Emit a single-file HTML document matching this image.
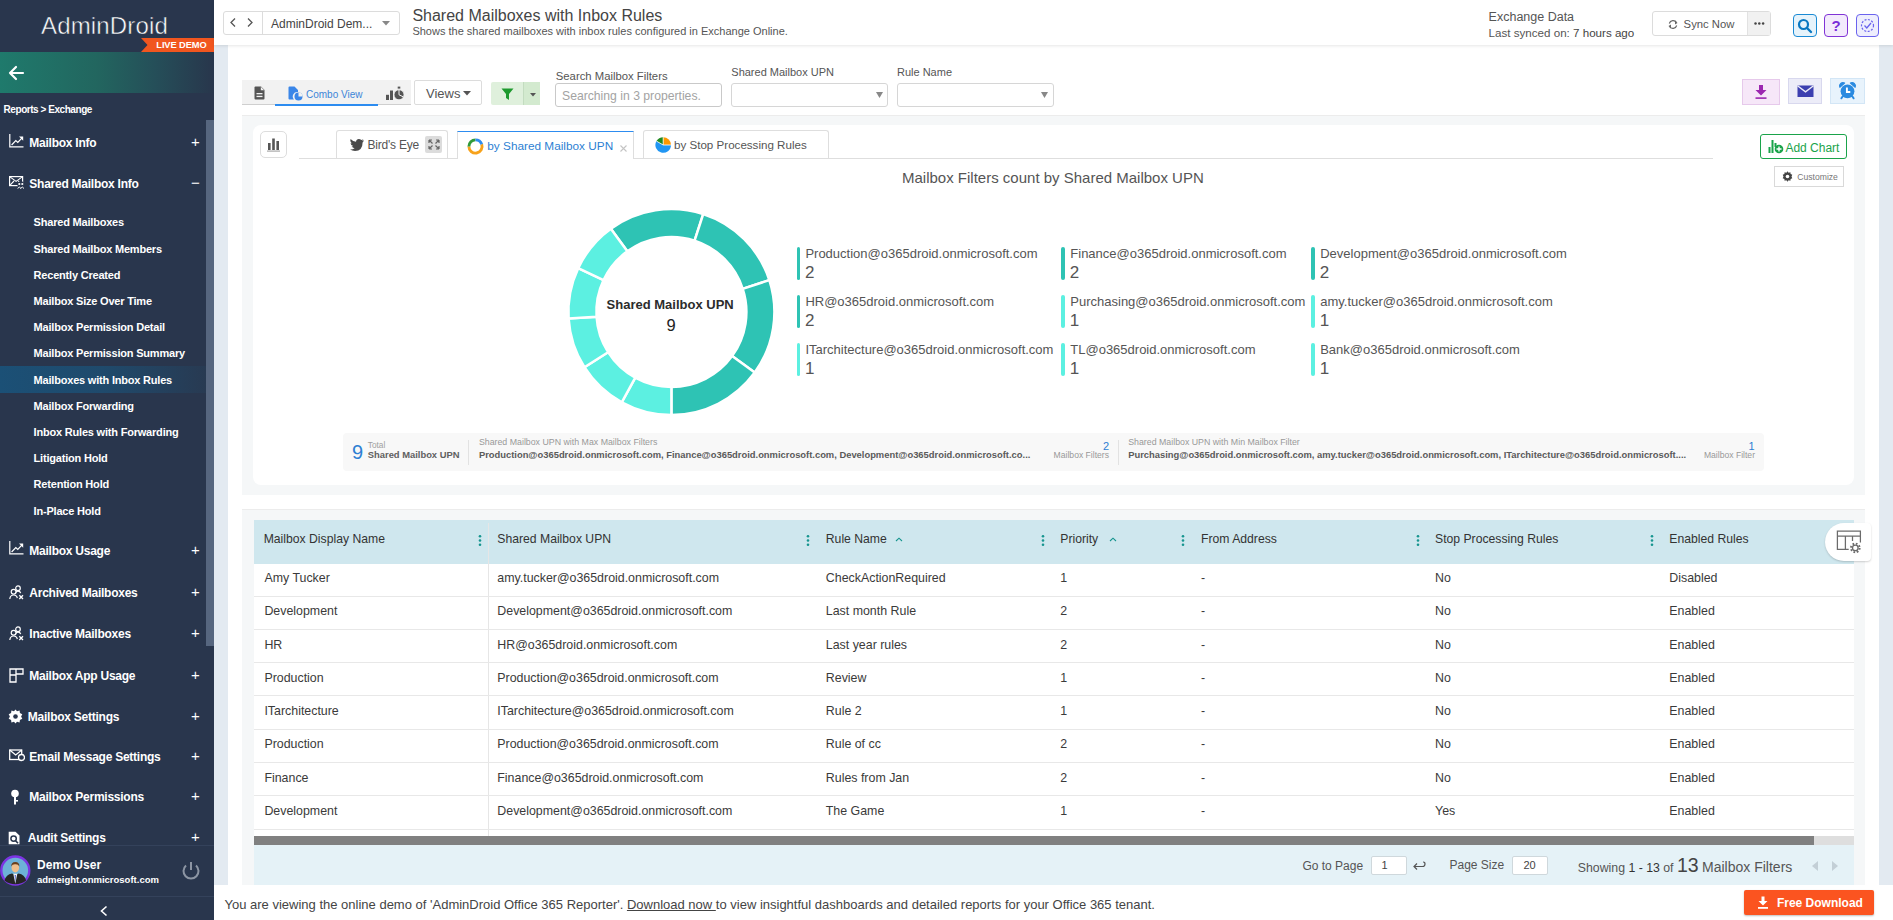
<!DOCTYPE html><html><head><meta charset="utf-8"><style>
html,body{margin:0;padding:0;}
body{width:1893px;height:920px;overflow:hidden;position:relative;background:#fff;font-family:"Liberation Sans",sans-serif;}
.t{position:absolute;white-space:nowrap;}
.r{position:absolute;box-sizing:border-box;}
</style></head><body>

<div class="r" style="left:0px;top:0px;width:214.0px;height:920.0px;background:#29364d"></div>
<div class="t" style="left:41px;top:9.0px;font-size:24px;line-height:34px;color:#fff;letter-spacing:0.15px;-webkit-text-stroke:0.5px #29364d;">AdminDroid</div>
<svg class="r" style="left:141px;top:38px;" width="73" height="14" viewBox="0 0 73 14"><polygon points="0,0 73,0 73,14 0,14 6.5,7" fill="#f1561f"/></svg>
<div class="t" style="left:156.3px;top:38.8px;font-size:9.3px;line-height:13px;color:#fff;font-weight:bold;letter-spacing:-0.1px;">LIVE DEMO</div>
<div class="r" style="left:0px;top:52px;width:214.0px;height:41.0px;background:linear-gradient(90deg,#1f7a6c 0%,#22665f 45%,#254f59 72%,#28364c 100%)"></div>
<svg class="r" style="left:7px;top:64px;" width="18" height="18" viewBox="0 0 18 18"><path d="M16,9 H3 M9,3 L3,9 L9,15" stroke="#fff" stroke-width="2.2" fill="none" stroke-linecap="round" stroke-linejoin="round"/></svg>
<div class="t" style="left:3.6px;top:102.7px;font-size:10px;line-height:14px;color:#fff;font-weight:bold;letter-spacing:-0.45px;">Reports &gt; Exchange</div>
<div class="r" style="left:206px;top:120px;width:8.0px;height:526.0px;background:#56667f"></div>
<div class="r" style="left:0px;top:366px;width:206.0px;height:27.0px;background:linear-gradient(90deg,#1b5076 0%,#1f4a6c 50%,#283a52 100%)"></div>
<svg class="r" style="left:9px;top:133.6px;" width="15" height="14" viewBox="0 0 15 14"><path d="M0.8,0 V12.8 H14.5" stroke="#fff" stroke-width="1.2" fill="none"/><path d="M2.6,11 L6.8,6.5 L8.8,8.5 L13.3,3.6" stroke="#fff" stroke-width="1.2" fill="none"/><path d="M10,2.6 H14.2 V6.8 Z" fill="#fff"/></svg>
<div class="t" style="left:29.3px;top:135.1px;font-size:12px;line-height:17px;color:#fff;font-weight:bold;letter-spacing:-0.25px;">Mailbox Info</div>
<div class="t" style="left:191px;top:134.1px;font-size:15px;line-height:16px;color:#fff;">+</div>
<svg class="r" style="left:9px;top:176.4px;" width="16" height="13" viewBox="0 0 16 13"><rect x="0.6" y="0.6" width="13" height="9" stroke="#fff" stroke-width="1.2" fill="none"/><path d="M0.6,0.6 L7.1,5.4 L13.6,0.6 M0.6,9.6 L5,5 M13.6,9.6 L9.2,5" stroke="#fff" stroke-width="1.1" fill="none"/><circle cx="11.8" cy="8.6" r="3.4" fill="#29364d"/><circle cx="10.3" cy="8" r="1.1" fill="#fff"/><circle cx="13.3" cy="8" r="1.1" fill="#fff"/><path d="M8.6,12.5 Q10.3,9.6 12,12.5 M11.6,12.5 Q13.3,9.6 15,12.5" stroke="#fff" stroke-width="1" fill="none"/></svg>
<div class="t" style="left:29.3px;top:175.9px;font-size:12px;line-height:17px;color:#fff;font-weight:bold;letter-spacing:-0.25px;">Shared Mailbox Info</div>
<div class="t" style="left:191px;top:174.9px;font-size:15px;line-height:16px;color:#fff;">&minus;</div>
<div class="t" style="left:33.6px;top:214.7px;font-size:11px;line-height:15px;color:#fff;font-weight:bold;letter-spacing:-0.2px;">Shared Mailboxes</div>
<div class="t" style="left:33.6px;top:241.7px;font-size:11px;line-height:15px;color:#fff;font-weight:bold;letter-spacing:-0.2px;">Shared Mailbox Members</div>
<div class="t" style="left:33.6px;top:267.5px;font-size:11px;line-height:15px;color:#fff;font-weight:bold;letter-spacing:-0.2px;">Recently Created</div>
<div class="t" style="left:33.6px;top:293.5px;font-size:11px;line-height:15px;color:#fff;font-weight:bold;letter-spacing:-0.2px;">Mailbox Size Over Time</div>
<div class="t" style="left:33.6px;top:319.7px;font-size:11px;line-height:15px;color:#fff;font-weight:bold;letter-spacing:-0.2px;">Mailbox Permission Detail</div>
<div class="t" style="left:33.6px;top:346.3px;font-size:11px;line-height:15px;color:#fff;font-weight:bold;letter-spacing:-0.2px;">Mailbox Permission Summary</div>
<div class="t" style="left:33.6px;top:372.5px;font-size:11px;line-height:15px;color:#fff;font-weight:bold;letter-spacing:-0.2px;">Mailboxes with Inbox Rules</div>
<div class="t" style="left:33.6px;top:398.5px;font-size:11px;line-height:15px;color:#fff;font-weight:bold;letter-spacing:-0.2px;">Mailbox Forwarding</div>
<div class="t" style="left:33.6px;top:424.7px;font-size:11px;line-height:15px;color:#fff;font-weight:bold;letter-spacing:-0.2px;">Inbox Rules with Forwarding</div>
<div class="t" style="left:33.6px;top:451.4px;font-size:11px;line-height:15px;color:#fff;font-weight:bold;letter-spacing:-0.2px;">Litigation Hold</div>
<div class="t" style="left:33.6px;top:477.2px;font-size:11px;line-height:15px;color:#fff;font-weight:bold;letter-spacing:-0.2px;">Retention Hold</div>
<div class="t" style="left:33.6px;top:503.5px;font-size:11px;line-height:15px;color:#fff;font-weight:bold;letter-spacing:-0.2px;">In-Place Hold</div>
<svg class="r" style="left:9px;top:541.4px;" width="15" height="14" viewBox="0 0 15 14"><path d="M0.8,0 V12.8 H14.5" stroke="#fff" stroke-width="1.2" fill="none"/><path d="M2.6,11 L6.8,6.5 L8.8,8.5 L13.3,3.6" stroke="#fff" stroke-width="1.2" fill="none"/><path d="M10,2.6 H14.2 V6.8 Z" fill="#fff"/></svg>
<div class="t" style="left:29.3px;top:542.9px;font-size:12px;line-height:17px;color:#fff;font-weight:bold;letter-spacing:-0.25px;">Mailbox Usage</div>
<div class="t" style="left:191px;top:541.9px;font-size:15px;line-height:16px;color:#fff;">+</div>
<svg class="r" style="left:9px;top:585.1px;" width="16" height="15" viewBox="0 0 16 15"><circle cx="9" cy="3.2" r="2.3" stroke="#fff" stroke-width="1.2" fill="none"/><path d="M6.3,9 Q6.8,6.2 9,6.2 Q11.2,6.2 11.7,8.2" stroke="#fff" stroke-width="1.2" fill="none"/><circle cx="4.6" cy="6.8" r="2.4" fill="#29364d" stroke="#fff" stroke-width="1.2"/><path d="M0.8,14 Q1.2,10 4.6,10 Q7.8,10 8.3,13.2" stroke="#fff" stroke-width="1.2" fill="none"/><path d="M10.3,10.3 L14,14 M14,10.3 L10.3,14" stroke="#fff" stroke-width="1.3"/></svg>
<div class="t" style="left:29.3px;top:585.1px;font-size:12px;line-height:17px;color:#fff;font-weight:bold;letter-spacing:-0.25px;">Archived Mailboxes</div>
<div class="t" style="left:191px;top:584.1px;font-size:15px;line-height:16px;color:#fff;">+</div>
<svg class="r" style="left:9px;top:626.0px;" width="16" height="15" viewBox="0 0 16 15"><circle cx="9" cy="3.2" r="2.3" stroke="#fff" stroke-width="1.2" fill="none"/><path d="M6.3,9 Q6.8,6.2 9,6.2 Q11.2,6.2 11.7,8.2" stroke="#fff" stroke-width="1.2" fill="none"/><circle cx="4.6" cy="6.8" r="2.4" fill="#29364d" stroke="#fff" stroke-width="1.2"/><path d="M0.8,14 Q1.2,10 4.6,10 Q7.8,10 8.3,13.2" stroke="#fff" stroke-width="1.2" fill="none"/><path d="M10.3,10.3 L14,14 M14,10.3 L10.3,14" stroke="#fff" stroke-width="1.3"/></svg>
<div class="t" style="left:29.3px;top:626.0px;font-size:12px;line-height:17px;color:#fff;font-weight:bold;letter-spacing:-0.25px;">Inactive Mailboxes</div>
<div class="t" style="left:191px;top:625.0px;font-size:15px;line-height:16px;color:#fff;">+</div>
<svg class="r" style="left:9px;top:667.7px;" width="15" height="15" viewBox="0 0 15 15"><path d="M1,1 H14 V6 H7 V14 H1 Z M1,7 H7 M7,1 V7" stroke="#fff" stroke-width="1.3" fill="none"/></svg>
<div class="t" style="left:29.3px;top:667.7px;font-size:12px;line-height:17px;color:#fff;font-weight:bold;letter-spacing:-0.25px;">Mailbox App Usage</div>
<div class="t" style="left:191px;top:666.7px;font-size:15px;line-height:16px;color:#fff;">+</div>
<svg class="r" style="left:8px;top:709.0px;" width="15" height="15" viewBox="0 0 15 15"><path d="M7.5,0.5 L9,2.3 L11.6,1.6 L11.9,4.1 L14.3,5.2 L13.1,7.5 L14.3,9.8 L11.9,10.9 L11.6,13.4 L9,12.7 L7.5,14.5 L6,12.7 L3.4,13.4 L3.1,10.9 L0.7,9.8 L1.9,7.5 L0.7,5.2 L3.1,4.1 L3.4,1.6 L6,2.3 Z" fill="#fff"/><circle cx="7.5" cy="7.5" r="2.3" fill="#29364d"/></svg>
<div class="t" style="left:27.8px;top:709.0px;font-size:12px;line-height:17px;color:#fff;font-weight:bold;letter-spacing:-0.25px;">Mailbox Settings</div>
<div class="t" style="left:191px;top:708.0px;font-size:15px;line-height:16px;color:#fff;">+</div>
<svg class="r" style="left:9px;top:749.0px;" width="16" height="13" viewBox="0 0 16 13"><rect x="0.7" y="1" width="12" height="9.5" stroke="#fff" stroke-width="1.3" fill="none"/><path d="M0.7,1 L6.7,6 L12.7,1" stroke="#fff" stroke-width="1.3" fill="none"/><circle cx="12.5" cy="8.5" r="3" fill="#29364d" stroke="#fff" stroke-width="1.3"/></svg>
<div class="t" style="left:29.3px;top:749.0px;font-size:12px;line-height:17px;color:#fff;font-weight:bold;letter-spacing:-0.25px;">Email Message Settings</div>
<div class="t" style="left:191px;top:748.0px;font-size:15px;line-height:16px;color:#fff;">+</div>
<svg class="r" style="left:9px;top:789.0px;" width="12" height="16" viewBox="0 0 12 16"><circle cx="6" cy="4.5" r="3.8" fill="#fff"/><rect x="5" y="6" width="2" height="9.5" fill="#fff"/><rect x="6" y="11" width="3" height="1.6" fill="#fff"/></svg>
<div class="t" style="left:29.3px;top:789.0px;font-size:12px;line-height:17px;color:#fff;font-weight:bold;letter-spacing:-0.25px;">Mailbox Permissions</div>
<div class="t" style="left:191px;top:788.0px;font-size:15px;line-height:16px;color:#fff;">+</div>
<svg class="r" style="left:8px;top:830.9px;" width="13" height="14" viewBox="0 0 13 14"><path d="M0.7,0.7 H7.5 L11.5,4.5 V13.3 H0.7 Z" fill="#fff"/><circle cx="5.6" cy="7.6" r="2.7" stroke="#29364d" stroke-width="1.5" fill="none"/><path d="M7.5,9.6 L10,12.2" stroke="#29364d" stroke-width="1.6"/></svg>
<div class="t" style="left:27.8px;top:829.9px;font-size:12px;line-height:17px;color:#fff;font-weight:bold;letter-spacing:-0.25px;">Audit Settings</div>
<div class="t" style="left:191px;top:828.9px;font-size:15px;line-height:16px;color:#fff;">+</div>
<div class="r" style="left:0px;top:844.5px;width:214.0px;height:52.0px;background:#29364d;border-top:1px solid #34425b;border-bottom:1px solid #34425b"></div>
<svg class="r" style="left:0px;top:855px;" width="31" height="31" viewBox="0 0 31 31"><circle cx="15.3" cy="15.5" r="14" fill="#6db1d8" stroke="#7c35e3" stroke-width="2.4"/><path d="M4.5,25.5 Q6,19.5 12,18.5 L15.3,20 L18.6,18.5 Q24.6,19.5 26.1,25.5 Q21.5,29.3 15.3,29.3 Q9.1,29.3 4.5,25.5 Z" fill="#262626"/><path d="M13.3,18.7 L15.3,28.8 L17.3,18.7 Z" fill="#f2f2f2"/><path d="M14.6,20 L15.3,28 L16,20 Z" fill="#5a6fd0"/><ellipse cx="15.3" cy="12.8" rx="3.8" ry="4.6" fill="#f0be8c"/><path d="M11.3,11.5 Q11,7 15.3,7 Q19.6,7 19.3,11.5 Q18.5,9 15.3,9.2 Q12.1,9 11.3,11.5 Z" fill="#6b3f1d"/></svg>
<div class="t" style="left:37px;top:857.3px;font-size:12px;line-height:17px;color:#fff;font-weight:bold;letter-spacing:0.1px;">Demo User</div>
<div class="t" style="left:37px;top:872.9px;font-size:9.5px;line-height:13px;color:#fff;font-weight:bold;">admeight.onmicrosoft.com</div>
<svg class="r" style="left:181px;top:861px;" width="20" height="19" viewBox="0 0 20 19"><path d="M5,4.5 A7.5,7.5 0 1 0 15,4.5" stroke="#8c95a3" stroke-width="2" fill="none"/><path d="M10,1 V9" stroke="#8c95a3" stroke-width="2"/></svg>
<svg class="r" style="left:99px;top:905px;" width="10" height="12" viewBox="0 0 10 12"><path d="M7.5,1.5 L2.5,6 L7.5,10.5" stroke="#fff" stroke-width="1.6" fill="none"/></svg>
<div class="r" style="left:214px;top:45px;width:14.0px;height:840.0px;background:#e3eaf1"></div>
<div class="r" style="left:1879px;top:45px;width:14.0px;height:840.0px;background:#e3eaf1"></div>
<div class="r" style="left:214px;top:0px;width:1679.0px;height:45.0px;background:#fff;box-shadow:0 1px 3px rgba(0,0,0,0.10)"></div>
<div class="r" style="left:222.5px;top:11px;width:177.5px;height:24.0px;border:1px solid #dcdcdc;border-radius:3px;background:#fff"></div>
<div class="r" style="left:261.5px;top:11px;width:1.0px;height:24.0px;background:#dcdcdc"></div>
<svg class="r" style="left:229px;top:17px;" width="8" height="11" viewBox="0 0 8 11"><path d="M6,1.5 L2,5.5 L6,9.5" stroke="#555" stroke-width="1.3" fill="none"/></svg>
<svg class="r" style="left:246px;top:17px;" width="8" height="11" viewBox="0 0 8 11"><path d="M2,1.5 L6,5.5 L2,9.5" stroke="#555" stroke-width="1.3" fill="none"/></svg>
<div class="t" style="left:271px;top:16.0px;font-size:12px;line-height:17px;color:#444;">AdminDroid Dem...</div>
<svg class="r" style="left:382px;top:21px;" width="9" height="5" viewBox="0 0 9 5"><polygon points="0,0 8,0 4,4.5" fill="#888"/></svg>
<div class="t" style="left:412.4px;top:4.5px;font-size:16px;line-height:22px;color:#444;">Shared Mailboxes with Inbox Rules</div>
<div class="t" style="left:412.4px;top:23.7px;font-size:11px;line-height:15px;color:#555;">Shows the shared mailboxes with inbox rules configured in Exchange Online.</div>
<div class="t" style="left:1488.6px;top:7.6px;font-size:12.5px;line-height:18px;color:#555;">Exchange Data</div>
<div class="t" style="left:1488.6px;top:25.0px;font-size:11.6px;line-height:16px;color:#555;">Last synced on: <span style="color:#444">7 hours ago</span></div>
<div class="r" style="left:1652.3px;top:11.2px;width:118.4px;height:25.3px;border:1px solid #dcdcdc;border-radius:3px;background:#fff"></div>
<div class="r" style="left:1747.3px;top:12.2px;width:22.4px;height:23.3px;background:#f1f1f1;border-left:1px solid #e2e2e2"></div>
<svg class="r" style="left:1668px;top:19px;" width="10" height="11" viewBox="0 0 10 11"><path d="M8.5,3.5 A4,4 0 0 0 1.3,4.5 M1.5,7.5 A4,4 0 0 0 8.7,6.5" stroke="#666" stroke-width="1.2" fill="none"/><polygon points="7,1.5 9.5,4 7,5.5" fill="#666"/><polygon points="3,9.5 0.5,7 3,5.5" fill="#666"/></svg>
<div class="t" style="left:1683.6px;top:16.0px;font-size:11.3px;line-height:16px;color:#555;">Sync Now</div>
<svg class="r" style="left:1753px;top:21px;" width="14" height="5" viewBox="0 0 14 5"><circle cx="2.5" cy="2.5" r="1.25" fill="#444"/><circle cx="6.3" cy="2.5" r="1.25" fill="#444"/><circle cx="10.1" cy="2.5" r="1.25" fill="#444"/></svg>
<div class="r" style="left:1793.1px;top:14.2px;width:23.8px;height:22.5px;border:1.5px solid #1a8ad4;border-radius:4px;background:#e6f3fb"></div>
<svg class="r" style="left:1797px;top:18px;" width="16" height="16" viewBox="0 0 16 16"><circle cx="6.5" cy="6.5" r="4.5" stroke="#0a78c2" stroke-width="2.2" fill="none"/><path d="M10,10 L14,14" stroke="#0a78c2" stroke-width="2.4" stroke-linecap="round"/></svg>
<div class="r" style="left:1824.2px;top:14.2px;width:23.5px;height:22.5px;border:1.5px solid #8033d6;border-radius:4px;background:#f3eafc"></div>
<div class="t" style="left:1831.5px;top:16.5px;font-size:15px;line-height:18px;color:#7a2dd8;font-weight:bold;">?</div>
<div class="r" style="left:1856.3px;top:14.2px;width:22.6px;height:22.5px;border:1.5px solid #6a63ee;border-radius:4px;background:#eeeefd"></div>
<svg class="r" style="left:1860px;top:18px;" width="15" height="15" viewBox="0 0 15 15"><circle cx="7.5" cy="7.5" r="6" stroke="#6a63ee" stroke-width="1.2" fill="none" stroke-dasharray="2 1.5"/><path d="M4.5,7.5 L6.8,10 L11,5" stroke="#6a63ee" stroke-width="1.3" fill="none"/></svg>
<div class="r" style="left:242px;top:80.2px;width:169.0px;height:25.1px;background:#f2f2f2;border-bottom:1px solid #cfcfcf"></div>
<div class="r" style="left:275px;top:103.8px;width:103.0px;height:2.0px;background:#2d8cf0"></div>
<svg class="r" style="left:253.5px;top:86px;" width="11" height="14" viewBox="0 0 11 14"><path d="M0.5,1.5 Q0.5,0.5 1.5,0.5 H7 L10.5,4 V12.5 Q10.5,13.5 9.5,13.5 H1.5 Q0.5,13.5 0.5,12.5 Z" fill="#555"/><path d="M6.8,0.8 V4.2 H10.2 Z" fill="#f2f2f2"/><rect x="2.5" y="7" width="6" height="1.3" fill="#f2f2f2"/><rect x="2.5" y="9.8" width="6" height="1.3" fill="#f2f2f2"/></svg>
<svg class="r" style="left:288px;top:86px;" width="15" height="15" viewBox="0 0 15 15"><path d="M0.5,1.5 Q0.5,0.5 1.5,0.5 H6.5 L10,4 V6 A4.5,4.5 0 0 0 6,13.5 H1.5 Q0.5,13.5 0.5,12.5 Z" fill="#3a86e8"/><circle cx="10.5" cy="10.5" r="4" fill="#3a86e8"/><path d="M10.5,10.5 V6.5 A4,4 0 0 1 14.5,10.5 Z" fill="#f2f2f2"/></svg>
<div class="t" style="left:306px;top:87.7px;font-size:10px;line-height:14px;color:#3d85d8;">Combo View</div>
<svg class="r" style="left:386px;top:86px;" width="19" height="15" viewBox="0 0 19 15"><rect x="0" y="8.8" width="3" height="5.2" fill="#555"/><rect x="4" y="4.5" width="3" height="9.5" fill="#555"/><circle cx="13" cy="8.8" r="5" fill="#555" stroke="#f2f2f2" stroke-width="0.8"/><path d="M13,8.8 V3.6 M13,8.8 L17.6,11" stroke="#f2f2f2" stroke-width="1"/><rect x="11.7" y="0.6" width="2.6" height="2" fill="#555"/></svg>
<div class="r" style="left:414.3px;top:80.3px;width:68.2px;height:25.0px;border:1px solid #dcdcdc;border-radius:2px;background:#fff"></div>
<div class="t" style="left:426px;top:84.5px;font-size:13px;line-height:18px;color:#555;">Views</div>
<svg class="r" style="left:463px;top:91px;" width="9" height="6" viewBox="0 0 9 6"><polygon points="0,0 8,0 4,4.5" fill="#555"/></svg>
<div class="r" style="left:490.5px;top:81.5px;width:49.5px;height:23.8px;background:#dff0dc;border-radius:2px"></div>
<div class="r" style="left:522.6px;top:81.5px;width:17.4px;height:23.8px;background:#d3eacf;border-left:1px solid #c3dcc0"></div>
<svg class="r" style="left:500.5px;top:88px;" width="13" height="13" viewBox="0 0 13 13"><path d="M0.5,0.5 H12.5 L8,6 V12 L5,10 V6 Z" fill="#1e9a2e"/></svg>
<svg class="r" style="left:529.5px;top:93px;" width="7" height="5" viewBox="0 0 7 5"><polygon points="0,0 6,0 3,3.5" fill="#555"/></svg>
<div class="t" style="left:555.8px;top:68.0px;font-size:11.3px;line-height:16px;color:#555;">Search Mailbox Filters</div>
<div class="r" style="left:555px;top:83px;width:167.0px;height:24.0px;border:1px solid #c9c9c9;border-radius:3px;background:#fff"></div>
<div class="t" style="left:562px;top:87.8px;font-size:12.2px;line-height:17px;color:#a3a3a3;">Searching in 3 properties.</div>
<div class="t" style="left:731.3px;top:64.7px;font-size:11px;line-height:15px;color:#555;">Shared Mailbox UPN</div>
<div class="r" style="left:731px;top:83px;width:157.0px;height:24.0px;border:1px solid #d6d6d6;border-radius:3px;background:#fff"></div>
<svg class="r" style="left:876px;top:92px;" width="9" height="7" viewBox="0 0 9 7"><polygon points="0,0 7,0 3.5,6" fill="#888"/></svg>
<div class="t" style="left:897px;top:64.7px;font-size:11px;line-height:15px;color:#555;">Rule Name</div>
<div class="r" style="left:897px;top:83px;width:157.0px;height:24.0px;border:1px solid #d6d6d6;border-radius:3px;background:#fff"></div>
<svg class="r" style="left:1041px;top:92px;" width="9" height="7" viewBox="0 0 9 7"><polygon points="0,0 7,0 3.5,6" fill="#888"/></svg>
<div class="r" style="left:1742px;top:79px;width:38.0px;height:25.8px;background:#f6e7f8;border:1px solid #e6c9eb"></div>
<svg class="r" style="left:1753px;top:84px;" width="16" height="16" viewBox="0 0 16 16"><path d="M6,1 H10 V6 H13.5 L8,11.5 L2.5,6 H6 Z" fill="#9c27b0"/><rect x="2.5" y="13.3" width="11" height="1.6" fill="#9c27b0"/></svg>
<div class="r" style="left:1788.2px;top:78.4px;width:33.4px;height:25.6px;background:#ececf8;border:1px solid #d8d8ee"></div>
<svg class="r" style="left:1796.5px;top:85px;" width="17" height="12.5" viewBox="0 0 17 12.5"><path d="M0.5,0.5 H16.5 V12 H0.5 Z" fill="#3c3fb0"/><path d="M0.5,0.8 L8.5,6.8 L16.5,0.8" stroke="#ececf8" stroke-width="1.4" fill="none"/></svg>
<div class="r" style="left:1830.3px;top:78.4px;width:34.4px;height:25.6px;background:#e8f3fc;border:1px solid #d3e6f6"></div>
<svg class="r" style="left:1837.5px;top:81px;" width="20" height="20" viewBox="0 0 20 20"><path d="M1.8,6.2 A3.4,3.4 0 0 1 6.6,2 Z M17.2,6.2 A3.4,3.4 0 0 0 12.4,2 Z" fill="#2a8ae0" stroke="#2a8ae0" stroke-width="1.2" stroke-linejoin="round"/><circle cx="9.5" cy="10.3" r="6.9" fill="#2a8ae0"/><path d="M4.6,15.5 L3.4,17.3 M14.4,15.5 L15.6,17.3" stroke="#2a8ae0" stroke-width="2" stroke-linecap="round"/><path d="M8.9,6.4 V11 H12.3" stroke="#fff" stroke-width="1.9" fill="none"/></svg>
<div class="r" style="left:242px;top:115px;width:1623.0px;height:380.0px;background:#f5f7f8;border-top:1px solid #ececec"></div>
<div class="r" style="left:253px;top:125px;width:1601.0px;height:360.0px;background:#fff;border-radius:8px"></div>
<div class="r" style="left:259.7px;top:131.4px;width:27.8px;height:26.2px;border:1px solid #dddddd;border-radius:5px;background:#fff"></div>
<svg class="r" style="left:266px;top:137px;" width="15" height="15" viewBox="0 0 15 15"><rect x="2" y="6" width="2.6" height="7" fill="#555"/><rect x="6.2" y="1.5" width="2.6" height="11.5" fill="#555"/><rect x="10.4" y="4" width="2.6" height="9" fill="#555"/><rect x="1" y="13.5" width="13" height="1.2" fill="#aaa"/></svg>
<div class="r" style="left:299px;top:157.8px;width:1414.0px;height:1.0px;background:#dedede"></div>
<div class="r" style="left:336px;top:130.4px;width:111.7px;height:28.1px;border:1px solid #dedede;border-bottom:none;border-radius:3px 3px 0 0;background:#fff"></div>
<svg class="r" style="left:348.5px;top:137px;" width="16" height="15" viewBox="0 0 16 15"><path d="M15,3 Q14,4 13,4.2 Q14,3.4 14.3,2.3 Q13.3,2.9 12.3,3.1 Q11.3,2 9.8,2 Q7.4,2 7,4.8 Q4,4.6 1.6,2 Q0.6,4.6 3,6.3 Q2.2,6.3 1.6,5.9 Q1.7,8.4 4.2,9 Q3.3,9.3 2.6,9.1 Q3.4,11.2 5.6,11.3 Q3.6,12.8 1,12.6 Q3.2,14 6,14 Q13.6,14 13.6,5.6 Q14.5,4.9 15,3 Z" fill="#4a4a4a"/></svg>
<div class="t" style="left:367.4px;top:137.3px;font-size:12px;line-height:17px;color:#555;letter-spacing:-0.2px;">Bird's Eye</div>
<div class="r" style="left:425.4px;top:136.3px;width:17.0px;height:16.4px;background:#dcdcdc;border-radius:2px"></div>
<svg class="r" style="left:427px;top:138px;" width="14" height="13" viewBox="0 0 14 13"><path d="M2,2 L5.5,5.5 M2,2 V5 M2,2 H5 M12,2 L8.5,5.5 M12,2 V5 M12,2 H9 M2,11 L5.5,7.5 M2,11 V8 M2,11 H5 M12,11 L8.5,7.5 M12,11 V8 M12,11 H9" stroke="#666" stroke-width="1.2" fill="none"/></svg>
<div class="r" style="left:456.5px;top:130.7px;width:177.9px;height:28.3px;border:1px solid #dedede;border-top:1.6px solid #2d8cf0;border-bottom:none;background:#fff"></div>
<svg class="r" style="left:466px;top:136.5px;" width="19" height="19" viewBox="0 0 19 19"><path d="M15.70,7.24 A6.6,6.6 0 1 1 2.9,9.5" stroke="#f7a21b" stroke-width="2.9" fill="none"/><path d="M2.9,9.5 A6.6,6.6 0 0 1 9.5,2.9" stroke="#2f9a3a" stroke-width="2.9" fill="none"/><path d="M9.5,2.9 A6.6,6.6 0 0 1 15.70,7.24" stroke="#2d8cf0" stroke-width="2.9" fill="none"/></svg>
<div class="t" style="left:487.3px;top:137.8px;font-size:11.8px;line-height:17px;color:#2d7fd3;">by Shared Mailbox UPN</div>
<svg class="r" style="left:619px;top:143.5px;" width="9" height="9" viewBox="0 0 9 9"><path d="M1.5,1.5 L7.5,7.5 M7.5,1.5 L1.5,7.5" stroke="#c4c4c4" stroke-width="1.1"/></svg>
<div class="r" style="left:643.2px;top:130.4px;width:185.4px;height:28.1px;border:1px solid #dedede;border-bottom:none;border-radius:3px 3px 0 0;background:#fff"></div>
<svg class="r" style="left:655px;top:137px;" width="17" height="17" viewBox="0 0 17 17"><path d="M8.2,8 V0.2 A7.8,7.8 0 0 1 16,8 Z" fill="#ff9800"/><path d="M8.2,8 H16 A7.8,7.8 0 1 1 1.45,4.1 Z" fill="#2196f3"/><path d="M8.2,8 L1.45,4.1 A7.8,7.8 0 0 1 8.2,0.2 Z" fill="#228b22"/><path d="M8.2,0.2 V8 H16 M8.2,8 L1.45,4.1" stroke="#fff" stroke-width="0.8" fill="none"/></svg>
<div class="t" style="left:674px;top:136.5px;font-size:11.6px;line-height:16px;color:#555;">by Stop Processing Rules</div>
<div class="r" style="left:1760px;top:134px;width:86.7px;height:24.6px;border:1.5px solid #1aa34a;border-radius:3px;background:#fff"></div>
<svg class="r" style="left:1767.5px;top:138.5px;" width="16" height="16" viewBox="0 0 16 16"><rect x="0.5" y="8" width="2" height="6" fill="#1aa34a"/><rect x="3.5" y="1" width="2" height="13" fill="#1aa34a"/><rect x="6.5" y="4" width="2" height="4" fill="#1aa34a"/><circle cx="11" cy="10" r="4.3" fill="#1aa34a"/><path d="M11,7.5 V12.5 M8.5,10 H13.5" stroke="#fff" stroke-width="1.4"/></svg>
<div class="t" style="left:1785.4px;top:139.5px;font-size:12px;line-height:17px;color:#1aa34a;">Add Chart</div>
<div class="r" style="left:1774px;top:165.9px;width:69.8px;height:20.7px;border:1px solid #d9d9d9;background:#fff"></div>
<svg class="r" style="left:1781.5px;top:171px;" width="11" height="11" viewBox="0 0 11 11"><path d="M5.5,0.3 L6.6,1.7 L8.4,1.2 L8.6,3 L10.3,3.8 L9.5,5.5 L10.3,7.2 L8.6,8 L8.4,9.8 L6.6,9.3 L5.5,10.7 L4.4,9.3 L2.6,9.8 L2.4,8 L0.7,7.2 L1.5,5.5 L0.7,3.8 L2.4,3 L2.6,1.2 L4.4,1.7 Z" fill="#444"/><circle cx="5.5" cy="5.5" r="1.8" fill="#fff"/></svg>
<div class="t" style="left:1797.3px;top:170.5px;font-size:8.6px;line-height:12px;color:#777;">Customize</div>
<div class="t" style="left:902px;top:166.7px;font-size:15px;line-height:21px;color:#555;">Mailbox Filters count by Shared Mailbox UPN</div>
<svg class="r" style="left:560px;top:200px;" width="224" height="224" viewBox="0 0 224 224"><path d="M50.86,28.67 A103,103 0 0 1 143.23,14.04 L134.58,40.67 A75,75 0 0 0 67.32,51.32 Z" fill="#2ec3b4" stroke="#fff" stroke-width="2.5" stroke-linejoin="miter"/><path d="M143.23,14.04 A103,103 0 0 1 209.36,80.17 L182.73,88.82 A75,75 0 0 0 134.58,40.67 Z" fill="#2ec3b4" stroke="#fff" stroke-width="2.5" stroke-linejoin="miter"/><path d="M209.36,80.17 A103,103 0 0 1 194.73,172.54 L172.08,156.08 A75,75 0 0 0 182.73,88.82 Z" fill="#2ec3b4" stroke="#fff" stroke-width="2.5" stroke-linejoin="miter"/><path d="M194.73,172.54 A103,103 0 0 1 111.40,215.00 L111.40,187.00 A75,75 0 0 0 172.08,156.08 Z" fill="#2ec3b4" stroke="#fff" stroke-width="2.5" stroke-linejoin="miter"/><path d="M111.40,215.00 A103,103 0 0 1 61.78,202.26 L75.27,177.72 A75,75 0 0 0 111.40,187.00 Z" fill="#5cf0e1" stroke="#fff" stroke-width="2.5" stroke-linejoin="miter"/><path d="M61.78,202.26 A103,103 0 0 1 24.43,167.19 L48.08,152.19 A75,75 0 0 0 75.27,177.72 Z" fill="#5cf0e1" stroke="#fff" stroke-width="2.5" stroke-linejoin="miter"/><path d="M24.43,167.19 A103,103 0 0 1 8.60,118.47 L36.55,116.71 A75,75 0 0 0 48.08,152.19 Z" fill="#5cf0e1" stroke="#fff" stroke-width="2.5" stroke-linejoin="miter"/><path d="M8.60,118.47 A103,103 0 0 1 18.20,68.14 L43.54,80.07 A75,75 0 0 0 36.55,116.71 Z" fill="#5cf0e1" stroke="#fff" stroke-width="2.5" stroke-linejoin="miter"/><path d="M18.20,68.14 A103,103 0 0 1 50.86,28.67 L67.32,51.32 A75,75 0 0 0 43.54,80.07 Z" fill="#5cf0e1" stroke="#fff" stroke-width="2.5" stroke-linejoin="miter"/></svg>
<div class="t" style="left:606.6px;top:296.2px;font-size:13px;line-height:18px;color:#2c2c2c;font-weight:bold;">Shared Mailbox UPN</div>
<div class="t" style="left:666.5px;top:314.3px;font-size:16.5px;line-height:23px;color:#222;">9</div>
<div class="r" style="left:796.5px;top:247.3px;width:3.5px;height:32.5px;background:#2ec3b4;border-radius:2px"></div>
<div class="t" style="left:805.4px;top:244.6px;font-size:13px;line-height:18px;color:#555;">Production@o365droid.onmicrosoft.com</div>
<div class="t" style="left:804.9px;top:260.9px;font-size:17px;line-height:24px;color:#555;">2</div>
<div class="r" style="left:1061px;top:247.3px;width:3.5px;height:32.5px;background:#2ec3b4;border-radius:2px"></div>
<div class="t" style="left:1070.3px;top:244.6px;font-size:13px;line-height:18px;color:#555;">Finance@o365droid.onmicrosoft.com</div>
<div class="t" style="left:1069.8px;top:260.9px;font-size:17px;line-height:24px;color:#555;">2</div>
<div class="r" style="left:1311px;top:247.3px;width:3.5px;height:32.5px;background:#2ec3b4;border-radius:2px"></div>
<div class="t" style="left:1320.2px;top:244.6px;font-size:13px;line-height:18px;color:#555;">Development@o365droid.onmicrosoft.com</div>
<div class="t" style="left:1319.7px;top:260.9px;font-size:17px;line-height:24px;color:#555;">2</div>
<div class="r" style="left:796.5px;top:295.3px;width:3.5px;height:32.5px;background:#2ec3b4;border-radius:2px"></div>
<div class="t" style="left:805.4px;top:292.6px;font-size:13px;line-height:18px;color:#555;">HR@o365droid.onmicrosoft.com</div>
<div class="t" style="left:804.9px;top:308.9px;font-size:17px;line-height:24px;color:#555;">2</div>
<div class="r" style="left:1061px;top:295.3px;width:3.5px;height:32.5px;background:#5cf0e1;border-radius:2px"></div>
<div class="t" style="left:1070.3px;top:292.6px;font-size:13px;line-height:18px;color:#555;">Purchasing@o365droid.onmicrosoft.com</div>
<div class="t" style="left:1069.8px;top:308.9px;font-size:17px;line-height:24px;color:#555;">1</div>
<div class="r" style="left:1311px;top:295.3px;width:3.5px;height:32.5px;background:#5cf0e1;border-radius:2px"></div>
<div class="t" style="left:1320.2px;top:292.6px;font-size:13px;line-height:18px;color:#555;">amy.tucker@o365droid.onmicrosoft.com</div>
<div class="t" style="left:1319.7px;top:308.9px;font-size:17px;line-height:24px;color:#555;">1</div>
<div class="r" style="left:796.5px;top:343.3px;width:3.5px;height:32.5px;background:#5cf0e1;border-radius:2px"></div>
<div class="t" style="left:805.4px;top:340.6px;font-size:13px;line-height:18px;color:#555;">ITarchitecture@o365droid.onmicrosoft.com</div>
<div class="t" style="left:804.9px;top:356.9px;font-size:17px;line-height:24px;color:#555;">1</div>
<div class="r" style="left:1061px;top:343.3px;width:3.5px;height:32.5px;background:#5cf0e1;border-radius:2px"></div>
<div class="t" style="left:1070.3px;top:340.6px;font-size:13px;line-height:18px;color:#555;">TL@o365droid.onmicrosoft.com</div>
<div class="t" style="left:1069.8px;top:356.9px;font-size:17px;line-height:24px;color:#555;">1</div>
<div class="r" style="left:1311px;top:343.3px;width:3.5px;height:32.5px;background:#5cf0e1;border-radius:2px"></div>
<div class="t" style="left:1320.2px;top:340.6px;font-size:13px;line-height:18px;color:#555;">Bank@o365droid.onmicrosoft.com</div>
<div class="t" style="left:1319.7px;top:356.9px;font-size:17px;line-height:24px;color:#555;">1</div>
<div class="r" style="left:343.4px;top:433.4px;width:1420.3px;height:37.5px;background:#f8f8f8;border-radius:4px"></div>
<div class="t" style="left:352px;top:437.5px;font-size:20px;line-height:28px;color:#2d7fd3;">9</div>
<div class="t" style="left:367.8px;top:439.2px;font-size:8.3px;line-height:12px;color:#a0a0a0;">Total</div>
<div class="t" style="left:367.8px;top:448.3px;font-size:9.4px;line-height:13px;color:#606060;font-weight:bold;">Shared Mailbox UPN</div>
<div class="r" style="left:468.3px;top:440px;width:1.0px;height:25.0px;background:#e2e2e2"></div>
<div class="t" style="left:478.9px;top:435.8px;font-size:8.8px;line-height:12px;color:#999;">Shared Mailbox UPN with Max Mailbox Filters</div>
<div class="t" style="left:478.9px;top:448.1px;font-size:9.4px;line-height:13px;color:#5a5a5a;font-weight:bold;">Production@o365droid.onmicrosoft.com, Finance@o365droid.onmicrosoft.com, Development@o365droid.onmicrosoft.co...</div>
<div class="t" style="left:1103px;top:438.5px;font-size:11px;line-height:15px;color:#2d7fd3;">2</div>
<div class="t" style="right:784px;top:449px;font-size:8.6px;line-height:12px;color:#999">Mailbox Filters</div>
<div class="r" style="left:1118.4px;top:440px;width:1.0px;height:25.0px;background:#e2e2e2"></div>
<div class="t" style="left:1128.2px;top:435.8px;font-size:8.8px;line-height:12px;color:#999;">Shared Mailbox UPN with Min Mailbox Filter</div>
<div class="t" style="left:1128.2px;top:448.1px;font-size:9.4px;line-height:13px;color:#5a5a5a;font-weight:bold;">Purchasing@o365droid.onmicrosoft.com, amy.tucker@o365droid.onmicrosoft.com, ITarchitecture@o365droid.onmicrosoft....</div>
<div class="t" style="left:1748.5px;top:438.5px;font-size:11px;line-height:15px;color:#2d7fd3;">1</div>
<div class="t" style="right:138px;top:449px;font-size:8.6px;line-height:12px;color:#999">Mailbox Filter</div>
<div class="r" style="left:242px;top:509px;width:1623.0px;height:376.0px;background:#f5f7f8;border-top:1px solid #ececec"></div>
<div class="r" style="left:254px;top:520px;width:1600.0px;height:316.0px;background:#fff"></div>
<div class="r" style="left:254px;top:520px;width:1600.0px;height:43.5px;background:#cfe7ee"></div>
<div class="t" style="left:263.7px;top:530.5px;font-size:12.2px;line-height:17px;color:#333;">Mailbox Display Name</div>
<div class="t" style="left:497.3px;top:530.5px;font-size:12.2px;line-height:17px;color:#333;">Shared Mailbox UPN</div>
<div class="t" style="left:825.8px;top:530.5px;font-size:12.2px;line-height:17px;color:#333;">Rule Name</div>
<div class="t" style="left:1060.3px;top:530.5px;font-size:12.2px;line-height:17px;color:#333;">Priority</div>
<div class="t" style="left:1201px;top:530.5px;font-size:12.2px;line-height:17px;color:#333;">From Address</div>
<div class="t" style="left:1435px;top:530.5px;font-size:12.2px;line-height:17px;color:#333;">Stop Processing Rules</div>
<div class="t" style="left:1669.3px;top:530.5px;font-size:12.2px;line-height:17px;color:#333;">Enabled Rules</div>
<svg class="r" style="left:478.2px;top:534px;" width="4" height="13" viewBox="0 0 4 13"><circle cx="2" cy="2.3" r="1.3" fill="#16958f"/><circle cx="2" cy="6.5" r="1.3" fill="#16958f"/><circle cx="2" cy="10.7" r="1.3" fill="#16958f"/></svg>
<svg class="r" style="left:806.3px;top:534px;" width="4" height="13" viewBox="0 0 4 13"><circle cx="2" cy="2.3" r="1.3" fill="#16958f"/><circle cx="2" cy="6.5" r="1.3" fill="#16958f"/><circle cx="2" cy="10.7" r="1.3" fill="#16958f"/></svg>
<svg class="r" style="left:1041.2px;top:534px;" width="4" height="13" viewBox="0 0 4 13"><circle cx="2" cy="2.3" r="1.3" fill="#16958f"/><circle cx="2" cy="6.5" r="1.3" fill="#16958f"/><circle cx="2" cy="10.7" r="1.3" fill="#16958f"/></svg>
<svg class="r" style="left:1181.4px;top:534px;" width="4" height="13" viewBox="0 0 4 13"><circle cx="2" cy="2.3" r="1.3" fill="#16958f"/><circle cx="2" cy="6.5" r="1.3" fill="#16958f"/><circle cx="2" cy="10.7" r="1.3" fill="#16958f"/></svg>
<svg class="r" style="left:1415.8px;top:534px;" width="4" height="13" viewBox="0 0 4 13"><circle cx="2" cy="2.3" r="1.3" fill="#16958f"/><circle cx="2" cy="6.5" r="1.3" fill="#16958f"/><circle cx="2" cy="10.7" r="1.3" fill="#16958f"/></svg>
<svg class="r" style="left:1650.2px;top:534px;" width="4" height="13" viewBox="0 0 4 13"><circle cx="2" cy="2.3" r="1.3" fill="#16958f"/><circle cx="2" cy="6.5" r="1.3" fill="#16958f"/><circle cx="2" cy="10.7" r="1.3" fill="#16958f"/></svg>
<svg class="r" style="left:894.5px;top:536.5px;" width="8" height="5" viewBox="0 0 8 5"><path d="M1,4 L4,1.2 L7,4" stroke="#16958f" stroke-width="1.1" fill="none"/></svg>
<svg class="r" style="left:1109px;top:536.5px;" width="8" height="5" viewBox="0 0 8 5"><path d="M1,4 L4,1.2 L7,4" stroke="#16958f" stroke-width="1.1" fill="none"/></svg>
<div class="r" style="left:488px;top:523px;width:1.2px;height:313.0px;background:#e6e6e6"></div>
<div class="r" style="left:254px;top:596px;width:1600.0px;height:1.0px;background:#e8e8e8"></div>
<div class="r" style="left:254px;top:629px;width:1600.0px;height:1.0px;background:#e8e8e8"></div>
<div class="r" style="left:254px;top:662px;width:1600.0px;height:1.0px;background:#e8e8e8"></div>
<div class="r" style="left:254px;top:695px;width:1600.0px;height:1.0px;background:#e8e8e8"></div>
<div class="r" style="left:254px;top:729px;width:1600.0px;height:1.0px;background:#e8e8e8"></div>
<div class="r" style="left:254px;top:762px;width:1600.0px;height:1.0px;background:#e8e8e8"></div>
<div class="r" style="left:254px;top:795px;width:1600.0px;height:1.0px;background:#e8e8e8"></div>
<div class="r" style="left:254px;top:829px;width:1600.0px;height:1.0px;background:#e8e8e8"></div>
<div class="t" style="left:264.4px;top:569.6px;font-size:12.4px;line-height:17px;color:#3a3a3a;">Amy Tucker</div>
<div class="t" style="left:497.3px;top:569.6px;font-size:12.4px;line-height:17px;color:#3a3a3a;">amy.tucker@o365droid.onmicrosoft.com</div>
<div class="t" style="left:825.8px;top:569.6px;font-size:12.4px;line-height:17px;color:#3a3a3a;">CheckActionRequired</div>
<div class="t" style="left:1060.3px;top:569.6px;font-size:12.4px;line-height:17px;color:#3a3a3a;">1</div>
<div class="t" style="left:1201px;top:569.6px;font-size:12.4px;line-height:17px;color:#3a3a3a;">-</div>
<div class="t" style="left:1435px;top:569.6px;font-size:12.4px;line-height:17px;color:#3a3a3a;">No</div>
<div class="t" style="left:1669.3px;top:569.6px;font-size:12.4px;line-height:17px;color:#3a3a3a;">Disabled</div>
<div class="t" style="left:264.4px;top:603.3px;font-size:12.4px;line-height:17px;color:#3a3a3a;">Development</div>
<div class="t" style="left:497.3px;top:603.3px;font-size:12.4px;line-height:17px;color:#3a3a3a;">Development@o365droid.onmicrosoft.com</div>
<div class="t" style="left:825.8px;top:603.3px;font-size:12.4px;line-height:17px;color:#3a3a3a;">Last month Rule</div>
<div class="t" style="left:1060.3px;top:603.3px;font-size:12.4px;line-height:17px;color:#3a3a3a;">2</div>
<div class="t" style="left:1201px;top:603.3px;font-size:12.4px;line-height:17px;color:#3a3a3a;">-</div>
<div class="t" style="left:1435px;top:603.3px;font-size:12.4px;line-height:17px;color:#3a3a3a;">No</div>
<div class="t" style="left:1669.3px;top:603.3px;font-size:12.4px;line-height:17px;color:#3a3a3a;">Enabled</div>
<div class="t" style="left:264.4px;top:637.3px;font-size:12.4px;line-height:17px;color:#3a3a3a;">HR</div>
<div class="t" style="left:497.3px;top:637.3px;font-size:12.4px;line-height:17px;color:#3a3a3a;">HR@o365droid.onmicrosoft.com</div>
<div class="t" style="left:825.8px;top:637.3px;font-size:12.4px;line-height:17px;color:#3a3a3a;">Last year rules</div>
<div class="t" style="left:1060.3px;top:637.3px;font-size:12.4px;line-height:17px;color:#3a3a3a;">2</div>
<div class="t" style="left:1201px;top:637.3px;font-size:12.4px;line-height:17px;color:#3a3a3a;">-</div>
<div class="t" style="left:1435px;top:637.3px;font-size:12.4px;line-height:17px;color:#3a3a3a;">No</div>
<div class="t" style="left:1669.3px;top:637.3px;font-size:12.4px;line-height:17px;color:#3a3a3a;">Enabled</div>
<div class="t" style="left:264.4px;top:670.3px;font-size:12.4px;line-height:17px;color:#3a3a3a;">Production</div>
<div class="t" style="left:497.3px;top:670.3px;font-size:12.4px;line-height:17px;color:#3a3a3a;">Production@o365droid.onmicrosoft.com</div>
<div class="t" style="left:825.8px;top:670.3px;font-size:12.4px;line-height:17px;color:#3a3a3a;">Review</div>
<div class="t" style="left:1060.3px;top:670.3px;font-size:12.4px;line-height:17px;color:#3a3a3a;">1</div>
<div class="t" style="left:1201px;top:670.3px;font-size:12.4px;line-height:17px;color:#3a3a3a;">-</div>
<div class="t" style="left:1435px;top:670.3px;font-size:12.4px;line-height:17px;color:#3a3a3a;">No</div>
<div class="t" style="left:1669.3px;top:670.3px;font-size:12.4px;line-height:17px;color:#3a3a3a;">Enabled</div>
<div class="t" style="left:264.4px;top:703.2px;font-size:12.4px;line-height:17px;color:#3a3a3a;">ITarchitecture</div>
<div class="t" style="left:497.3px;top:703.2px;font-size:12.4px;line-height:17px;color:#3a3a3a;">ITarchitecture@o365droid.onmicrosoft.com</div>
<div class="t" style="left:825.8px;top:703.2px;font-size:12.4px;line-height:17px;color:#3a3a3a;">Rule 2</div>
<div class="t" style="left:1060.3px;top:703.2px;font-size:12.4px;line-height:17px;color:#3a3a3a;">1</div>
<div class="t" style="left:1201px;top:703.2px;font-size:12.4px;line-height:17px;color:#3a3a3a;">-</div>
<div class="t" style="left:1435px;top:703.2px;font-size:12.4px;line-height:17px;color:#3a3a3a;">No</div>
<div class="t" style="left:1669.3px;top:703.2px;font-size:12.4px;line-height:17px;color:#3a3a3a;">Enabled</div>
<div class="t" style="left:264.4px;top:736.3px;font-size:12.4px;line-height:17px;color:#3a3a3a;">Production</div>
<div class="t" style="left:497.3px;top:736.3px;font-size:12.4px;line-height:17px;color:#3a3a3a;">Production@o365droid.onmicrosoft.com</div>
<div class="t" style="left:825.8px;top:736.3px;font-size:12.4px;line-height:17px;color:#3a3a3a;">Rule of cc</div>
<div class="t" style="left:1060.3px;top:736.3px;font-size:12.4px;line-height:17px;color:#3a3a3a;">2</div>
<div class="t" style="left:1201px;top:736.3px;font-size:12.4px;line-height:17px;color:#3a3a3a;">-</div>
<div class="t" style="left:1435px;top:736.3px;font-size:12.4px;line-height:17px;color:#3a3a3a;">No</div>
<div class="t" style="left:1669.3px;top:736.3px;font-size:12.4px;line-height:17px;color:#3a3a3a;">Enabled</div>
<div class="t" style="left:264.4px;top:770.0px;font-size:12.4px;line-height:17px;color:#3a3a3a;">Finance</div>
<div class="t" style="left:497.3px;top:770.0px;font-size:12.4px;line-height:17px;color:#3a3a3a;">Finance@o365droid.onmicrosoft.com</div>
<div class="t" style="left:825.8px;top:770.0px;font-size:12.4px;line-height:17px;color:#3a3a3a;">Rules from Jan</div>
<div class="t" style="left:1060.3px;top:770.0px;font-size:12.4px;line-height:17px;color:#3a3a3a;">2</div>
<div class="t" style="left:1201px;top:770.0px;font-size:12.4px;line-height:17px;color:#3a3a3a;">-</div>
<div class="t" style="left:1435px;top:770.0px;font-size:12.4px;line-height:17px;color:#3a3a3a;">No</div>
<div class="t" style="left:1669.3px;top:770.0px;font-size:12.4px;line-height:17px;color:#3a3a3a;">Enabled</div>
<div class="t" style="left:264.4px;top:803.1px;font-size:12.4px;line-height:17px;color:#3a3a3a;">Development</div>
<div class="t" style="left:497.3px;top:803.1px;font-size:12.4px;line-height:17px;color:#3a3a3a;">Development@o365droid.onmicrosoft.com</div>
<div class="t" style="left:825.8px;top:803.1px;font-size:12.4px;line-height:17px;color:#3a3a3a;">The Game</div>
<div class="t" style="left:1060.3px;top:803.1px;font-size:12.4px;line-height:17px;color:#3a3a3a;">1</div>
<div class="t" style="left:1201px;top:803.1px;font-size:12.4px;line-height:17px;color:#3a3a3a;">-</div>
<div class="t" style="left:1435px;top:803.1px;font-size:12.4px;line-height:17px;color:#3a3a3a;">Yes</div>
<div class="t" style="left:1669.3px;top:803.1px;font-size:12.4px;line-height:17px;color:#3a3a3a;">Enabled</div>
<div class="r" style="left:1824.5px;top:523px;width:46.5px;height:37.6px;background:#fff;border-radius:19px 4px 4px 19px;box-shadow:0 1px 2px rgba(0,0,0,0.18)"></div>
<svg class="r" style="left:1836px;top:530px;" width="26" height="26" viewBox="0 0 26 26"><path d="M12.7,19.4 H1.4 V1.1 H24.4 V12.5 M1.4,6.2 H24.4 M9.4,6.2 V19.4 M16.5,6.2 V11" stroke="#6b6b6b" stroke-width="1.25" fill="none"/><circle cx="19.3" cy="17.9" r="4.3" stroke="#6b6b6b" stroke-width="2" fill="none" stroke-dasharray="1.7 1.68"/><circle cx="19.3" cy="17.9" r="2.8" stroke="#6b6b6b" stroke-width="1.3" fill="#fff"/></svg>
<div class="r" style="left:254px;top:836px;width:1600.0px;height:9.0px;background:#dedede"></div>
<div class="r" style="left:254px;top:836px;width:1559.7px;height:9.0px;background:#808080"></div>
<div class="r" style="left:254px;top:845px;width:1600.0px;height:39.7px;background:#e5f2f7"></div>
<div class="t" style="left:1302.4px;top:857.8px;font-size:12px;line-height:17px;color:#555;">Go to Page</div>
<div class="r" style="left:1371.2px;top:856px;width:35.8px;height:18.5px;border:1px solid #cfd8dc;border-radius:2px;background:#fff"></div>
<div class="t" style="left:1381.5px;top:858.0px;font-size:11px;line-height:15px;color:#444;">1</div>
<svg class="r" style="left:1412px;top:861px;" width="15" height="10" viewBox="0 0 15 10"><path d="M2,5.5 H10.5 Q13,5.5 13,3 Q13,1 11,1 M5,2.5 L2,5.5 L5,8.5" stroke="#555" stroke-width="1.2" fill="none"/></svg>
<div class="t" style="left:1449.5px;top:857.0px;font-size:12px;line-height:17px;color:#555;">Page Size</div>
<div class="r" style="left:1511.8px;top:856px;width:36.2px;height:18.5px;border:1px solid #cfd8dc;border-radius:2px;background:#fff"></div>
<div class="t" style="left:1523.5px;top:858.0px;font-size:11px;line-height:15px;color:#444;">20</div>
<div class="t" style="left:1577.8px;top:855.0px;font-size:12.3px;line-height:20px;color:#555;">Showing <span style="color:#333">1 - 13</span> of <span style="font-size:19.5px;color:#444">13</span> <span style="font-size:14px">Mailbox Filters</span></div>
<svg class="r" style="left:1809px;top:860px;" width="12" height="12" viewBox="0 0 12 12"><polygon points="9,1 9,11 3,6" fill="#c3cfd6"/></svg>
<svg class="r" style="left:1829px;top:860px;" width="12" height="12" viewBox="0 0 12 12"><polygon points="3,1 3,11 9,6" fill="#c3cfd6"/></svg>
<div class="r" style="left:214px;top:884.7px;width:1679.0px;height:35.3px;background:#fff"></div>
<div class="t" style="left:224.5px;top:895.5px;font-size:13px;line-height:18px;color:#444;">You are viewing the online demo of 'AdminDroid Office 365 Reporter'. <span style="text-decoration:underline">Download now </span>to view insightful dashboards and detailed reports for your Office 365 tenant.</div>
<div class="r" style="left:1744.3px;top:890px;width:129.7px;height:25.0px;background:#fb5420;border-radius:2px;box-shadow:0 1px 2px rgba(0,0,0,0.25)"></div>
<svg class="r" style="left:1757px;top:896px;" width="12" height="14" viewBox="0 0 12 14"><path d="M4.5,0.5 H7.5 V5 H10.5 L6,9.5 L1.5,5 H4.5 Z" fill="#fff"/><rect x="1" y="11" width="10" height="1.8" fill="#fff"/></svg>
<div class="t" style="left:1776.9px;top:894.7px;font-size:12px;line-height:17px;color:#fff;font-weight:bold;">Free Download</div>
</body></html>
